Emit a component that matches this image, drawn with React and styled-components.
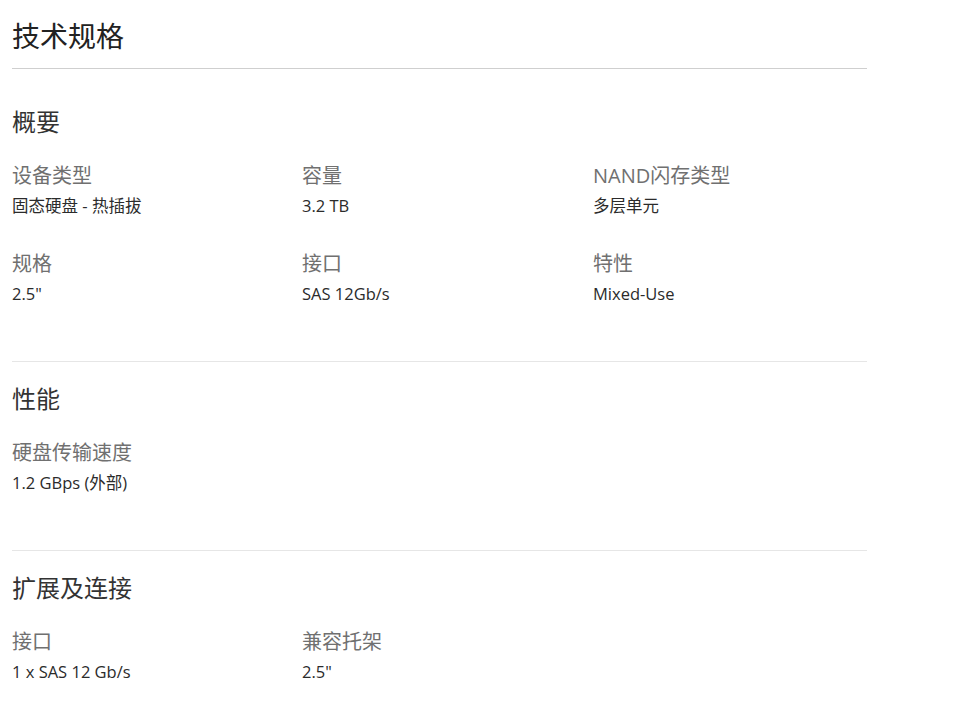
import React from "react";
import styled, { createGlobalStyle } from "styled-components";

const Global = createGlobalStyle`
  html, body { margin: 0; padding: 0; background: #fff; }
  body {
    font-family: "Segoe UI", "Open Sans", "Noto Sans CJK SC", sans-serif;
    color: #333;
  }
`;

const Page = styled.div`
  width: 855px;
  padding: 0 12px;
`;

const Header = styled.h1`
  margin: 0;
  padding: 16px 0 12px;
  font-size: 28px;
  line-height: 40px;
  font-weight: 400;
  color: #222;
  border-bottom: 1px solid #cfcfcf;
`;

const Section = styled.section`
  padding: ${(p) => (p.$first ? "37px" : "21px")} 0 57px;
  border-bottom: ${(p) => (p.$last ? "none" : "1px solid #e6e6e6")};
`;

const SectionTitle = styled.h2`
  margin: 0 0 24px;
  font-size: 24px;
  line-height: 32px;
  font-weight: 400;
  color: #333;
`;

const Grid = styled.div`
  display: grid;
  grid-template-columns: 290px 291px 1fr;
  row-gap: 34px;
`;

const Item = styled.div`
  display: flex;
  flex-direction: column;
`;

const Label = styled.div`
  font-size: 20px;
  line-height: 28px;
  color: #707070;
`;

const Value = styled.div`
  margin-top: 6px;
  font-size: 16.5px;
  line-height: 20px;
  color: #2b2b2b;
`;

const sections = [
  {
    title: "概要",
    items: [
      ["设备类型", "固态硬盘 - 热插拔"],
      ["容量", "3.2 TB"],
      ["NAND闪存类型", "多层单元"],
      ["规格", '2.5"'],
      ["接口", "SAS 12Gb/s"],
      ["特性", "Mixed-Use"],
    ],
  },
  {
    title: "性能",
    items: [["硬盘传输速度", "1.2 GBps (外部)"]],
  },
  {
    title: "扩展及连接",
    items: [
      ["接口", "1 x SAS 12 Gb/s"],
      ["兼容托架", '2.5"'],
    ],
  },
];

export default function App() {
  return (
    <Page>
      <Global />
      <Header>技术规格</Header>
      {sections.map((s, i) => (
        <Section key={s.title} $first={i === 0} $last={i === sections.length - 1}>
          <SectionTitle>{s.title}</SectionTitle>
          <Grid>
            {s.items.map(([label, value]) => (
              <Item key={label}>
                <Label>{label}</Label>
                <Value>{value}</Value>
              </Item>
            ))}
          </Grid>
        </Section>
      ))}
    </Page>
  );
}
